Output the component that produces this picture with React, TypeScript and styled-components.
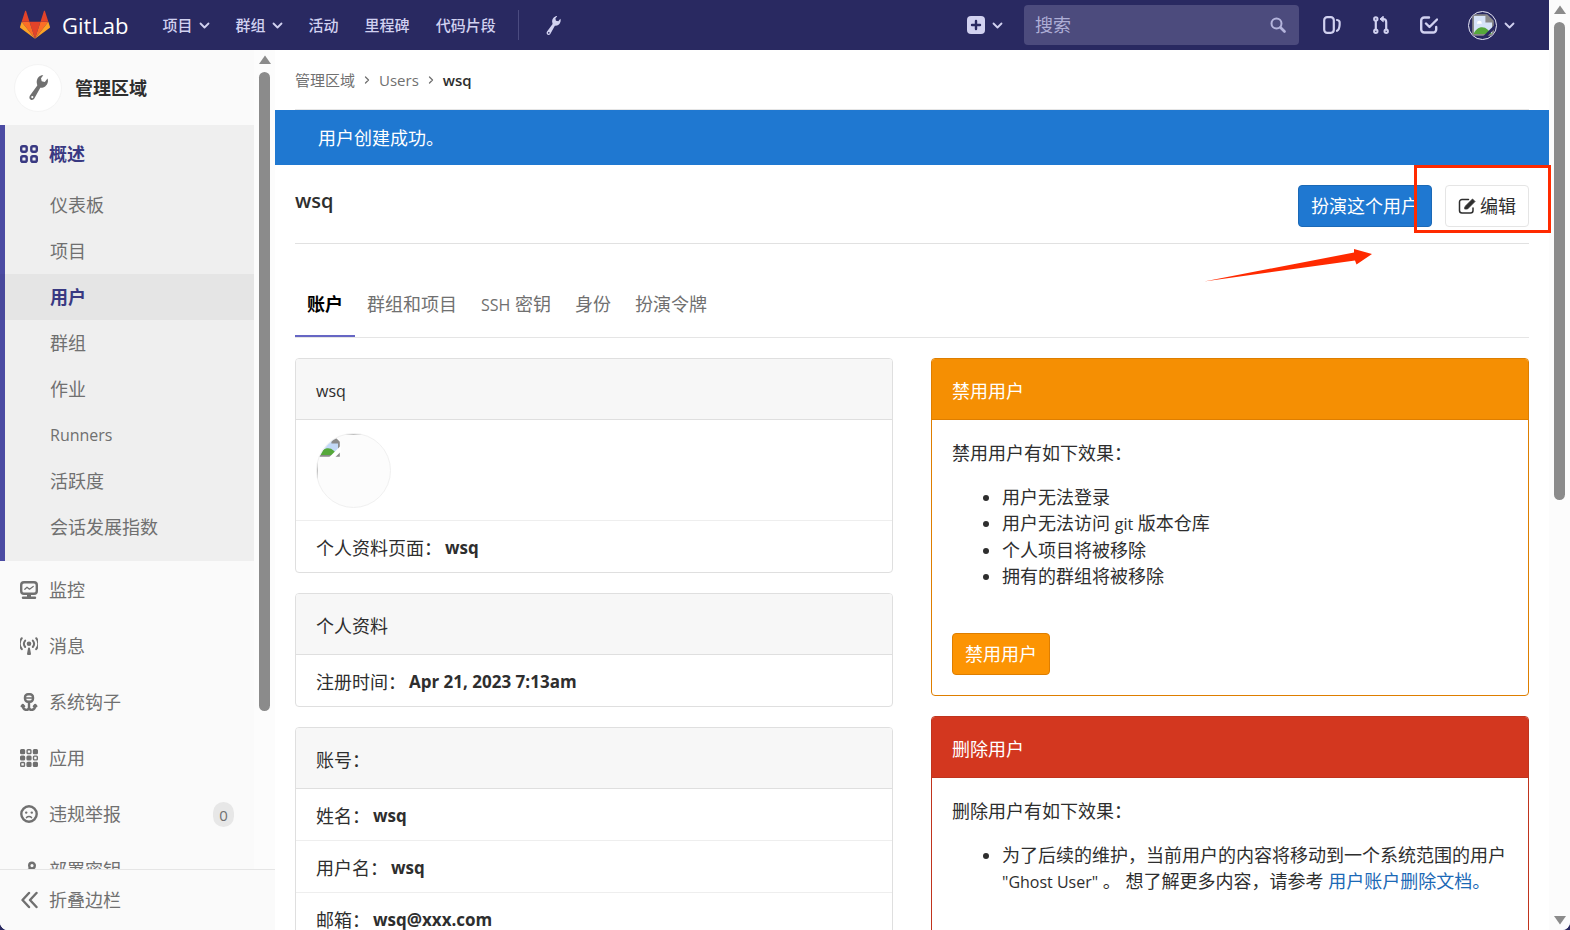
import React from "react";
import styled, { createGlobalStyle, css } from "styled-components";

const Global = createGlobalStyle`
  *, *::before, *::after { box-sizing: border-box; }
  body {
    margin: 0;
    overflow: hidden;
    font-family: "Open Sans", "Noto Sans CJK SC", sans-serif;
    font-size: 18px;
    line-height: 26px;
    color: #2e2e2e;
    background: #292961;
  }
  button, input { font: inherit; color: inherit; }
  a { color: inherit; text-decoration: none; }
  ul { list-style: none; margin: 0; padding: 0; }
`;

const Window = styled.div`
  display: flex;
  height: 100vh;
  border-radius: 0 0 8px 8px;
  overflow: hidden;
  background: #fff;
`;
const Page = styled.div`
  flex: 1;
  min-width: 0;
  display: flex;
  flex-direction: column;
`;

/* ---------- scroll bars ---------- */
const Track = styled.div`
  flex: none;
  width: 21px;
  display: flex;
  flex-direction: column;
  align-items: center;
  padding: 5px 0;
  background: #fcfcfc;
`;
const Triangle = styled.svg`
  flex: none;
  width: 12px;
  height: 10px;
  fill: #8b8b8b;
`;
const Thumb = styled.div<{ $share: number }>`
  width: 11px;
  height: ${(p) => p.$share}%;
  margin-top: 7px;
  border-radius: 6px;
  background: #8b8b8b;
`;
const Spring = styled.div`
  flex: 1;
`;

/* ---------- top bar ---------- */
const Navbar = styled.header`
  flex: none;
  height: 50px;
  display: flex;
  align-items: center;
  padding: 0 34px 0 20px;
  background: #292961;
  color: #d1d1f0;
  font-size: 15px;
  font-weight: 500;
`;
const Brand = styled.a`
  display: flex;
  align-items: center;
  gap: 12px;
  margin-right: 34px;
  color: #fff;
  font-size: 22px;
  font-weight: 400;
`;
const NavLinks = styled.nav`
  display: flex;
  align-items: center;
  gap: 26px;
`;
const NavLink = styled.a`
  display: flex;
  align-items: center;
  gap: 6px;
`;
const Divider = styled.span`
  width: 1px;
  height: 30px;
  margin: 0 27px 0 22px;
  background: #4b4b80;
`;
const IconButton = styled.button<{ $gap?: number }>`
  display: flex;
  align-items: center;
  gap: 7px;
  padding: 0;
  margin-left: ${(p) => p.$gap ?? 0}px;
  border: 0;
  background: none;
`;
const SearchBox = styled.label`
  width: 275px;
  height: 40px;
  margin-left: 21px;
  padding: 0 13px 0 11px;
  display: flex;
  align-items: center;
  border-radius: 4px;
  background: #4c4b7d;
`;
const SearchInput = styled.input`
  flex: 1;
  min-width: 0;
  padding: 0;
  border: 0;
  outline: 0;
  background: none;
  font-size: 18px;
  font-weight: 400;
  &::placeholder { color: #aeaed6; opacity: 1; }
`;
const NavAvatar = styled.span`
  width: 29px;
  height: 29px;
  display: flex;
  align-items: center;
  justify-content: center;
  overflow: hidden;
  border: 1px solid #e8e8f8;
  border-radius: 50%;
`;

/* ---------- side bar ---------- */
const Body = styled.div`
  flex: 1;
  min-height: 0;
  display: flex;
`;
const Sidebar = styled.aside`
  flex: none;
  width: 275px;
  display: flex;
  flex-direction: column;
  background: #fafafa;
  color: #707070;
`;
const SideScroll = styled.div`
  flex: 1;
  min-height: 0;
  display: flex;
`;
const SideMenu = styled.nav`
  flex: 1;
  overflow: hidden;
`;
const Context = styled.a`
  height: 75px;
  padding-left: 14px;
  display: flex;
  align-items: center;
  gap: 13px;
  color: #2e2e2e;
  font-weight: 700;
`;
const ContextIcon = styled.span`
  width: 48px;
  height: 48px;
  display: flex;
  align-items: center;
  justify-content: center;
  border-radius: 50%;
  border: 1px solid #f4f4f4;
  background: #fff;
  color: #707070;
`;
const ActiveGroup = styled.div`
  padding-bottom: 11px;
  margin-bottom: 1px;
  background: #efefef;
  box-shadow: inset 5px 0 0 #4b4ba3;
`;
const SideLink = styled.a<{ $active?: boolean }>`
  height: 56px;
  padding: 0 20px;
  display: flex;
  align-items: center;
  gap: 11px;
  ${(p) => p.$active && css`
    height: 57px;
    color: #393982;
    font-weight: 700;
  `}
`;
const SubLink = styled.a<{ $active?: boolean }>`
  height: 46px;
  padding-left: 50px;
  display: flex;
  align-items: center;
  ${(p) => p.$active && css`
    color: #393982;
    font-weight: 700;
    background: rgba(0, 0, 0, 0.04);
  `}
`;
const Count = styled.span`
  margin-left: auto;
  width: 21px;
  height: 25px;
  border-radius: 12px;
  background: #e7e7e7;
  text-align: center;
  font-size: 15px;
`;
const Collapse = styled.button`
  flex: none;
  height: 61px;
  padding: 0 20px;
  display: flex;
  align-items: center;
  gap: 11px;
  border: 0;
  border-top: 1px solid #e5e5e5;
  background: #fafafa;
`;

/* ---------- content ---------- */
const Main = styled.main`
  flex: 1;
  min-width: 0;
  overflow-x: visible;
  overflow-y: clip;
`;
const Breadcrumbs = styled.nav`
  height: 60px;
  margin: 0 20px;
  display: flex;
  align-items: center;
  gap: 8px;
  border-bottom: 1px solid #e5e5e5;
  font-size: 15px;
  color: #707070;
`;
const Current = styled.a`
  color: #2e2e2e;
  font-weight: 600;
`;
const Flash = styled.div`
  height: 55px;
  padding: 0 43px;
  display: flex;
  align-items: center;
  background: #1f78d1;
  color: #fff;
`;
const TitleRow = styled.div`
  height: 79px;
  margin: 0 20px;
  padding-top: 20px;
  display: flex;
  align-items: flex-start;
  gap: 13px;
  border-bottom: 1px solid #e1e1e1;
`;
const Title = styled.h3`
  flex: 1;
  margin: 3px 0 0;
  font-size: 20px;
  line-height: 26px;
  font-weight: 600;
`;
const Button = styled.button<{ $tone: "info" | "plain" | "warning" }>`
  height: 42px;
  padding: 0 12px;
  display: flex;
  align-items: center;
  gap: 4px;
  border-radius: 4px;
  border: 1px solid;
  ${(p) => p.$tone === "info" && css`background: #1f78d1; border-color: #1b69b6; color: #fff;`}
  ${(p) => p.$tone === "plain" && css`background: #fff; border-color: #e5e5e5; color: #2e2e2e;`}
  ${(p) => p.$tone === "warning" && css`background: #fc9403; border-color: #de7e00; color: #fff;`}
`;
const Marked = styled.div`
  position: relative;
`;
const MarkFrame = styled.span`
  position: absolute;
  inset: -20px -22px -6px -31px;
  border: 3px solid #ff2a00;
  pointer-events: none;
`;
const MarkArrow = styled.svg`
  position: absolute;
  right: 157px;
  top: 62px;
  width: 168px;
  height: 36px;
  fill: #ff2a00;
`;
const Tabs = styled.nav`
  height: 94px;
  margin: 0 20px 20px;
  display: flex;
  align-items: flex-end;
  border-bottom: 1px solid #e5e5e5;
`;
const Tab = styled.a<{ $active?: boolean }>`
  height: 64px;
  padding: 18px 12px 0;
  color: #707070;
  ${(p) => p.$active && css`
    color: #000;
    font-weight: 700;
    border-bottom: 2px solid #6666c4;
  `}
`;
const Columns = styled.div`
  margin: 0 20px;
  display: grid;
  grid-template-columns: 1fr 1fr;
  gap: 38px;
  align-items: start;
`;
const Column = styled.div`
  display: flex;
  flex-direction: column;
  gap: 20px;
`;
const tones = {
  plain: ["#f7f7f7", "#dfdfdf", "#2e2e2e"],
  warning: ["#f58f03", "#de7e00", "#fff"],
  danger: ["#d3371f", "#c0341d", "#fff"],
};
type Tone = keyof typeof tones;
const Card = styled.section<{ $tone: Tone }>`
  border: 1px solid ${(p) => tones[p.$tone][1]};
  border-radius: 4px;
  overflow: hidden;
  background: #fff;
`;
const CardHeader = styled.div<{ $tone: Tone }>`
  height: 61px;
  padding: 4px 20px 0;
  display: flex;
  align-items: center;
  border-bottom: 1px solid ${(p) => tones[p.$tone][1]};
  background: ${(p) => tones[p.$tone][0]};
  color: ${(p) => tones[p.$tone][2]};
`;
const Row = styled.li<{ $media?: boolean }>`
  padding: ${(p) => (p.$media ? "13px 20px 12px" : "14px 20px 11px")};
  display: flex;
  gap: 3px;
  & + & { border-top: 1px solid #eee; }
`;
const BigAvatar = styled.span`
  position: relative;
  width: 75px;
  height: 75px;
  display: flex;
  overflow: hidden;
  border-radius: 50%;
  border: 1px solid #f0f0f0;
  background: #fcfcfc;
  &::before {
    content: "";
    position: absolute;
    inset: 0;
    border: solid #c0c0c0;
    border-width: 1px 0 0 1px;
  }
`;
const CardBody = styled.div`
  padding: 20px;
`;
const Para = styled.p`
  margin: 0 0 18px;
`;
const Bullets = styled.ul`
  margin: 0 0 44px;
  padding-left: 50px;
  list-style: disc;
`;
const DocLink = styled.a`
  color: #1b69b6;
`;
const Latin = styled.span`
  font-size: 16px;
`;
const Value = styled.strong`
  font-size: 17px;
  font-weight: 700;
`;

/* ---------- drawings ---------- */
const Svg = styled.svg<{ $w: number; $h?: number; $bold?: boolean }>`
  flex: none;
  width: ${(p) => p.$w}px;
  height: ${(p) => p.$h ?? p.$w}px;
  fill: none;
  stroke: currentColor;
  stroke-width: 2;
  stroke-linecap: round;
  stroke-linejoin: round;
`;
const Caret = () => (
  <Svg $w={11} viewBox="0 0 11 11"><path d="M1.5 3.5l4 4 4-4" strokeWidth="1.8" /></Svg>
);
const CrumbArrow = () => (
  <Svg $w={8} viewBox="0 0 8 8"><path d="M2.5 1l3 3-3 3" strokeWidth="1.3" /></Svg>
);
const Wrench = ({ width, height }: { width: number; height: number }) => (
  <Svg $w={width} $h={height} viewBox="0 0 19 25">
    <path
      fill="currentColor" stroke="none" fillRule="evenodd"
      d="M12 .5C8.500 2 7 5.500 8 9l.3 1.500L1 20.500c-1 1.700-.7 3.500.8 4.200 1.400.6 2.800.1 3.500-1.100l6-10.800c3.200.4 6.500-1.800 7.400-5.300.4-1.500.3-3-.2-4L15.800 7l-3.100-.8-.7-3L14.300.3C13.500 0 12.700.2 12 .5zM3.300 21a1.100 1.100 0 1 1 0 2.200 1.100 1.100 0 0 1 0-2.200z"
    />
  </Svg>
);
const Tanuki = () => (
  <Svg $w={30} viewBox="0 0 36 36">
    <g stroke="none">
      <path fill="#e24329" d="M18 34.400l6.600-20.400H11.400z" />
      <path fill="#fc6d26" d="M18 34.400L11.400 14H2z M18 34.400L24.600 14H34z" />
      <path fill="#fca326" d="M2 14L.1 20.200a1.300 1.300 0 0 0 .5 1.500L18 34.400z M34 14l1.900 6.200a1.300 1.300 0 0 1-.5 1.500L18 34.400z" />
      <path fill="#e24329" d="M2 14h9.400L7.400 1.500c-.2-.7-1.200-.7-1.400 0z M34 14h-9.400l4-12.500c.2-.7 1.200-.7 1.400 0z" />
    </g>
  </Svg>
);
const BrokenImage = () => (
  <Svg $w={24} viewBox="0 0 20 20">
    <g stroke="none">
      <path fill="#c3d9f7" d="M2 2h11l5 5v11H2z" />
      <path fill="#fff" d="M5 8.500a2 2 0 0 1 4 0v.5H5z" />
      <path fill="#55a83a" d="M2 18c2-6 8-8 12-4l4 4z" />
      <path fill="#fff" d="M13 2l5 5h-5z" />
      <path fill="#8a8a8a" d="M1 1h12.500L19 6.500V19H1zM2.500 2.500v15h15V8H12V2.500z" fillRule="evenodd" />
      <path fill="#fff" d="M20 9.500L9.500 20h5L20 14.500z" />
    </g>
  </Svg>
);
const NavBrokenImage = () => (
  <Svg $w={24} viewBox="0 0 20 20">
    <g stroke="none">
      <path fill="#d6e3f8" d="M2 2h11l5 5v11H2z" />
      <path fill="#fff" d="M5 8.500a2 2 0 0 1 4 0v.5H5zM13 2l5 5h-5z" />
      <path fill="#55a83a" d="M2 18c2-6 8-8 12-4l4 4z" />
      <path fill="#8a8a8a" d="M1 1h12.500L19 6.500V19H1zM2.500 2.500v15h15V8H12V2.500z" fillRule="evenodd" />
      <path fill="#292961" d="M20 9.500L9.500 20h3.500l7-7z" />
    </g>
  </Svg>
);

type Glyph = "overview" | "monitor" | "signal" | "hook" | "apps" | "sad" | "key";
const glyphs: Record<Glyph, React.ReactNode> = {
  overview: (
    <>
      {[1.2, 11.3].map((x) => [1.2, 11.3].map((y) => (
        <rect key={`${x}-${y}`} x={x} y={y} width="5.5" height="5.5" rx="1.6" strokeWidth="2.4" />
      )))}
    </>
  ),
  monitor: (
    <>
      <rect x="1.2" y="1.2" width="15.6" height="11.6" rx="2.8" strokeWidth="2.4" />
      <path d="M4.800 8.200L7 6.200l2.500 2 3.700-2.700" strokeWidth="1.300" />
      <path d="M9 13v3" strokeWidth="4" strokeLinecap="butt" />
      <path d="M3 16.800h12" strokeWidth="2.400" />
    </>
  ),
  signal: (
    <>
      <circle cx="9" cy="6.800" r="2.300" fill="currentColor" stroke="none" />
      <path d="M9 11.500l-1 5.500h2z" fill="currentColor" />
      <path d="M5.200 3.600a5 5 0 0 0 0 6.400M12.800 3.600a5 5 0 0 1 0 6.400" />
      <path d="M1.800 1.200a9 9 0 0 0 0 11M16.200 1.200a9 9 0 0 1 0 11" />
    </>
  ),
  hook: (
    <>
      <rect x="5" y="1.200" width="8" height="7.600" rx="3" strokeWidth="2.400" />
      <path d="M5 5h8" strokeWidth="1.600" />
      <path d="M9 9v6.500M2.800 12.500c-.2 5 5.200 5.500 6.200 2.500 1 3 6.400 2.500 6.200-2.500" strokeWidth="2.400" />
      <path d="M1.500 13.200l1.300-1.400 1.500 1.400M16.500 13.200l-1.300-1.400-1.500 1.400" />
    </>
  ),
  apps: (
    <>
      {[0, 1, 2].map((r) => [0, 1, 2].map((c) => {
        const hollow = (r === 0 && c === 1) || (r === 1 && c === 2) || (r === 2 && c === 0);
        return (
          <rect
            key={`${r}-${c}`} x={c * 6.4 + 0.7} y={r * 6.4 + 0.7} width="3.800" height="3.800" rx="0.800"
            strokeWidth="1.400" fill={hollow ? "none" : "currentColor"}
          />
        );
      }))}
    </>
  ),
  sad: (
    <>
      <circle cx="9" cy="9" r="7.700" strokeWidth="2.400" />
      <g fill="currentColor" stroke="none"><circle cx="6.200" cy="7.600" r="1.200" /><circle cx="11.800" cy="7.600" r="1.200" /></g>
      <path d="M6.500 12.600c1.400-1.600 3.600-1.600 5 0" strokeWidth="1.500" />
    </>
  ),
  key: <path d="M12 1.800a2.800 2.800 0 1 1 0 5.600 2.800 2.800 0 0 1 0-5.600zM10 7l-7 9" strokeWidth="2.400" />,
};
const SideIcon = ({ name }: { name: Glyph }) => <Svg $w={18} viewBox="0 0 18 18">{glyphs[name]}</Svg>;

const subItems = ["仪表板", "项目", "用户", "群组", "作业", "Runners", "活跃度", "会话发展指数"];
const sideItems: { icon: Glyph; text: string; count?: number }[] = [
  { icon: "monitor", text: "监控" },
  { icon: "signal", text: "消息" },
  { icon: "hook", text: "系统钩子" },
  { icon: "apps", text: "应用" },
  { icon: "sad", text: "违规举报", count: 0 },
  { icon: "key", text: "部署密钥" },
];

function InfoCard({ title, rows, avatar }: { title: string; rows: [string, string][]; avatar?: boolean }) {
  return (
    <Card $tone="plain">
      <CardHeader $tone="plain">{/^\w+$/.test(title) ? <Latin>{title}</Latin> : title}</CardHeader>
      <ul>
        {avatar && <Row $media><BigAvatar><BrokenImage /></BigAvatar></Row>}
        {rows.map(([label, value]) => (
          <Row key={label}><span>{label}</span><Value>{value}</Value></Row>
        ))}
      </ul>
    </Card>
  );
}

export default function App() {
  return (
    <Window>
      <Global />
      <Page>
        <Navbar>
          <Brand href="#"><Tanuki />GitLab</Brand>
          <NavLinks>
            <NavLink href="#">项目<Caret /></NavLink>
            <NavLink href="#">群组<Caret /></NavLink>
            <NavLink href="#">活动</NavLink>
            <NavLink href="#">里程碑</NavLink>
            <NavLink href="#">代码片段</NavLink>
          </NavLinks>
          <Divider />
          <IconButton aria-label="管理区域"><Wrench width={15} height={19} /></IconButton>
          <Spring />
          <IconButton aria-label="新建">
            <Svg $w={18} viewBox="0 0 18 18">
              <rect x="0" y="0" width="18" height="18" rx="4" fill="currentColor" stroke="none" />
              <path d="M9 5v8M5 9h8" stroke="#292961" strokeWidth="2.400" />
            </Svg>
            <Caret />
          </IconButton>
          <SearchBox>
            <SearchInput type="text" placeholder="搜索" aria-label="搜索" />
            <Svg $w={16} viewBox="0 0 16 16" color="#b4b4dc"><circle cx="6.500" cy="6.500" r="5" /><path d="M10.500 10.500l4 4" strokeWidth="2.600" /></Svg>
          </SearchBox>
          <IconButton $gap={24} aria-label="议题">
            <Svg $w={18} viewBox="0 0 18 18"><rect x="1.200" y="1.200" width="9.600" height="15.600" rx="3" strokeWidth="2.200" /><path d="M14 4c3 .5 2.800 2 2.600 5-.2 3-.8 5-2.600 5.800" strokeWidth="2.200" /></Svg>
          </IconButton>
          <IconButton $gap={31} aria-label="合并请求">
            <Svg $w={18} viewBox="0 0 18 18"><circle cx="3.800" cy="3" r="1.700" /><circle cx="3.800" cy="15.300" r="1.700" /><circle cx="14.200" cy="15.300" r="1.700" /><path d="M3.800 5v8.500M14.200 13.500V6c0-2-1-3-3-3H9.500" strokeWidth="2.200" /><path d="M11 .5L8 3l3 2.500z" fill="currentColor" strokeWidth="1" /></Svg>
          </IconButton>
          <IconButton $gap={30} aria-label="待办事项">
            <Svg $w={18} viewBox="0 0 18 18"><path d="M9 1.500H4.200a3 3 0 0 0-3 3v9a3 3 0 0 0 3 3h9a3 3 0 0 0 3-3V11M6 7.500l3.500 3.500L17 3.500" strokeWidth="2.400" /></Svg>
          </IconButton>
          <IconButton $gap={30} aria-label="用户菜单">
            <NavAvatar><NavBrokenImage /></NavAvatar>
            <Caret />
          </IconButton>
        </Navbar>

        <Body>
          <Sidebar>
            <SideScroll>
              <SideMenu>
                <Context href="#"><ContextIcon><Wrench width={19} height={25} /></ContextIcon>管理区域</Context>
                <ActiveGroup>
                  <SideLink href="#" $active><SideIcon name="overview" />概述</SideLink>
                  {subItems.map((t) => (
                    <SubLink key={t} href="#" $active={t === "用户"}>{t === "Runners" ? <Latin>{t}</Latin> : t}</SubLink>
                  ))}
                </ActiveGroup>
                {sideItems.map((s) => (
                  <SideLink key={s.text} href="#">
                    <SideIcon name={s.icon} />{s.text}
                    {s.count !== undefined && <Count>{s.count}</Count>}
                  </SideLink>
                ))}
              </SideMenu>
              <Track>
                <Triangle viewBox="0 0 12 10"><path d="M6 0.500L12 9H0z" /></Triangle>
                <Thumb $share={79} />
              </Track>
            </SideScroll>
            <Collapse>
              <Svg $w={18} viewBox="0 0 18 18"><path d="M9 2L2.500 9 9 16M16.500 2L10 9l6.500 7" strokeWidth="2.400" /></Svg>折叠边栏
            </Collapse>
          </Sidebar>

          <Main>
            <Breadcrumbs>
              <a href="#">管理区域</a><CrumbArrow /><a href="#">Users</a><CrumbArrow /><Current href="#">wsq</Current>
            </Breadcrumbs>
            <Flash>用户创建成功。</Flash>
            <TitleRow>
              <Title>wsq</Title>
              <Button $tone="info">扮演这个用户</Button>
              <Marked>
                <Button $tone="plain">
                  <Svg $w={18} viewBox="0 0 18 18">
                    <path d="M10.500 2.500H4A2.500 2.500 0 0 0 1.500 5v8.500A2.500 2.500 0 0 0 4 16h8.500a2.500 2.500 0 0 0 2.500-2.500V11" strokeWidth="1.500" />
                    <path d="M7 9.500L14.500 2l2.500 2.500L9.500 12H7z" fill="currentColor" strokeWidth="0.800" />
                  </Svg>
                  编辑
                </Button>
                <MarkFrame />
                <MarkArrow viewBox="0 0 168 36"><path d="M0 34.500L150 5.500V2l18 5-15.500 10.500-1.500-4z" /></MarkArrow>
              </Marked>
            </TitleRow>
            <Tabs>
              <Tab href="#" $active>账户</Tab>
              <Tab href="#">群组和项目</Tab>
              <Tab href="#"><Latin>SSH</Latin> 密钥</Tab>
              <Tab href="#">身份</Tab>
              <Tab href="#">扮演令牌</Tab>
            </Tabs>
            <Columns>
              <Column>
                <InfoCard title="wsq" avatar rows={[["个人资料页面：", "wsq"]]} />
                <InfoCard title="个人资料" rows={[["注册时间：", "Apr 21, 2023 7:13am"]]} />
                <InfoCard title="账号：" rows={[["姓名：", "wsq"], ["用户名：", "wsq"], ["邮箱：", "wsq@xxx.com"]]} />
              </Column>
              <Column>
                <Card $tone="warning">
                  <CardHeader $tone="warning">禁用用户</CardHeader>
                  <CardBody>
                    <Para>禁用用户有如下效果：</Para>
                    <Bullets>
                      <li>用户无法登录</li>
                      <li>用户无法访问 <Latin>git</Latin> 版本仓库</li>
                      <li>个人项目将被移除</li>
                      <li>拥有的群组将被移除</li>
                    </Bullets>
                    <Button $tone="warning">禁用用户</Button>
                  </CardBody>
                </Card>
                <Card $tone="danger">
                  <CardHeader $tone="danger">删除用户</CardHeader>
                  <CardBody>
                    <Para>删除用户有如下效果：</Para>
                    <Bullets>
                      <li>
                        为了后续的维护，当前用户的内容将移动到一个系统范围的用户 <Latin>"Ghost User"</Latin> 。 想了解更多内容，请参考 <DocLink href="#">用户账户删除文档。</DocLink>
                      </li>
                    </Bullets>
                  </CardBody>
                </Card>
              </Column>
            </Columns>
          </Main>
        </Body>
      </Page>
      <Track>
        <Triangle viewBox="0 0 12 10"><path d="M6 0.500L12 9H0z" /></Triangle>
        <Thumb $share={52} />
        <Spring />
        <Triangle viewBox="0 0 12 10"><path d="M6 9.500L12 1H0z" /></Triangle>
      </Track>
    </Window>
  );
}
